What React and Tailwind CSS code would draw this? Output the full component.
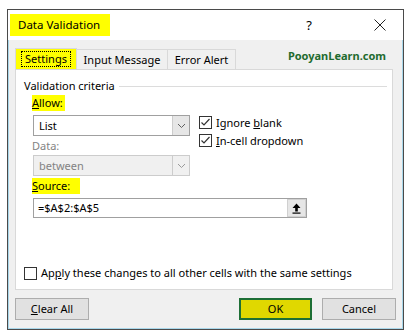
import React from 'react'

const font = { fontFamily: '"Noto Sans", "Open Sans", sans-serif' }

// Small chevron used by the combo boxes
function Chevron({ color = '#606060' }) {
  return (
    <svg width="9" height="6" viewBox="0 0 9 6">
      <path d="M1 1 L4.5 4.5 L8 1" fill="none" stroke={color} strokeWidth="1" />
    </svg>
  )
}

function CheckBox({ checked }) {
  return (
    <div className="w-[13px] h-[13px] border border-[#333] bg-white flex items-center justify-center shrink-0">
      {checked && (
        <svg width="11" height="11" viewBox="0 0 11 11">
          <path d="M1.5 5.5 L4 8 L9.5 2" fill="none" stroke="#333" strokeWidth="1.2" />
        </svg>
      )}
    </div>
  )
}

function Combo({ value, disabled }) {
  return (
    <div
      className={`ml-px w-[157px] h-[21px] border flex items-stretch ${
        disabled ? 'border-[#cccccc] bg-[#f0f0f0]' : 'border-[#a0a0a0] bg-white'
      }`}
    >
      <div className={`flex-1 pl-[5px] flex items-center ${disabled ? 'text-[#838383]' : 'text-black'}`}>
        {value}
      </div>
      <div
        className={`w-[17px] flex items-center justify-center border-l ${
          disabled ? 'border-[#cccccc] bg-[#f0f0f0]' : 'border-[#cccccc] bg-[#e6e6e6]'
        }`}
      >
        <Chevron color={disabled ? '#9a9a9a' : '#606060'} />
      </div>
    </div>
  )
}

export default function App() {
  return (
    <div className="w-[407px] h-[335px] bg-white pt-[9px] pl-[7px] text-[11px] leading-[16px] text-black" style={font}>
      <div className="w-[397px] h-[321px] border border-[#4a4a4a] flex flex-col">
        {/* Title bar */}
        <div className="h-[30px] bg-white flex items-start">
          <div className="ml-[2px] mt-[4px] h-[22px] w-[100px] bg-[#ffff00] flex items-center pl-[8px] text-[11.5px]">
            Data Validation
          </div>
          <div className="ml-auto mt-[7px] mr-[62px] text-[13px]">?</div>
          <div className="mt-[9px] mr-[17px]">
            <svg width="12" height="12" viewBox="0 0 12 12">
              <path d="M0.5 0.5 L11.5 11.5 M11.5 0.5 L0.5 11.5" stroke="#222" strokeWidth="1" />
            </svg>
          </div>
        </div>

        {/* Body */}
        <div className="flex-1 bg-[#f0f0f0] border-x border-b border-[#a9d7ea] px-[6px] pt-[9px]">
          {/* Tabs */}
          <div className="flex items-end h-[20px]">
            <div className="w-[62px] h-[21px] bg-[#ffff00] border border-[#d9d9d9] border-b-0 flex items-center justify-center">
              <span className="border border-dotted border-black px-[3px] leading-[14px]">Settings</span>
            </div>
            <div className="w-[91px] h-[20px] border border-[#d9d9d9] border-l-0 border-b-0 flex items-center justify-center">
              Input Message
            </div>
            <div className="w-[68px] h-[20px] border border-[#d9d9d9] border-l-0 border-b-0 flex items-center justify-center">
              Error Alert
            </div>
            <div className="ml-auto mr-[10px] mb-[5px] text-[11px] font-bold text-[#1f6b2f]">PooyanLearn.com</div>
          </div>

          {/* Panel */}
          <div className="w-[378px] h-[221px] bg-white border border-[#d9d9d9] flex flex-col">
            <div className="mt-[8px] pl-[8px] flex items-center">
              <span>Validation criteria</span>
              <div className="flex-1 h-px bg-[#dcdcdc] ml-[4px] mr-[5px]" />
            </div>

            <div className="pl-[16px] flex">
              <div className="flex flex-col">
                <div className="mt-px h-[16px] w-[33px] bg-[#ffff00] flex items-center">
                  <span><u>A</u>llow:</span>
                </div>
                <div className="mt-[4px]">
                  <Combo value="List" />
                </div>
                <div className="mt-[2px] h-[16px] text-[#838383]">Data:</div>
                <div className="mt-px">
                  <Combo value="between" disabled />
                </div>
              </div>
              <div className="ml-[9px] mt-[22px] flex flex-col gap-[5px]">
                <div className="flex items-center gap-[4px] h-[13px]">
                  <CheckBox checked />
                  <span>Ignore <u>b</u>lank</span>
                </div>
                <div className="flex items-center gap-[4px] h-[13px]">
                  <CheckBox checked />
                  <span><u>I</u>n-cell dropdown</span>
                </div>
              </div>
            </div>

            <div className="pl-[16px] mt-[2px]">
              <div className="h-[16px] w-[48px] bg-[#ffff00] flex items-center">
                <span><u>S</u>ource:</span>
              </div>
              <div className="mt-[4px] ml-px w-[274px] h-[20px] border border-[#a0a0a0] bg-white flex items-stretch">
                <div className="flex-1 pl-[4px] flex items-center">=$A$2:$A$5</div>
                <div className="w-[19px] bg-[#e6e6e6] border border-[#d0d0d0] flex items-center justify-center">
                  <svg width="9" height="11" viewBox="0 0 9 11">
                    <path d="M4.5 0.5 L8.5 5 L5.8 5 L5.8 8.5 L3.2 8.5 L3.2 5 L0.5 5 Z" fill="#000" />
                    <rect x="0.5" y="9.5" width="8" height="1.2" fill="#000" />
                  </svg>
                </div>
              </div>
            </div>

            <div className="mt-[47px] pl-[8px] flex items-center gap-[4px]">
              <CheckBox />
              <span>Ap<u>p</u>ly these changes to all other cells with the same settings</span>
            </div>
          </div>

          {/* Buttons */}
          <div className="mt-[8px] flex">
            <div className="w-[74px] h-[22px] bg-[#e1e1e1] border border-[#adadad] flex items-center justify-center">
              <span><u>C</u>lear All</span>
            </div>
            <div className="ml-auto w-[73px] h-[22px] bg-[#e0d800] border-2 border-[#1e6f36] flex items-center justify-center">
              OK
            </div>
            <div className="ml-[10px] w-[74px] h-[22px] bg-[#e1e1e1] border border-[#adadad] flex items-center justify-center">
              Cancel
            </div>
          </div>
        </div>
      </div>
    </div>
  )
}
